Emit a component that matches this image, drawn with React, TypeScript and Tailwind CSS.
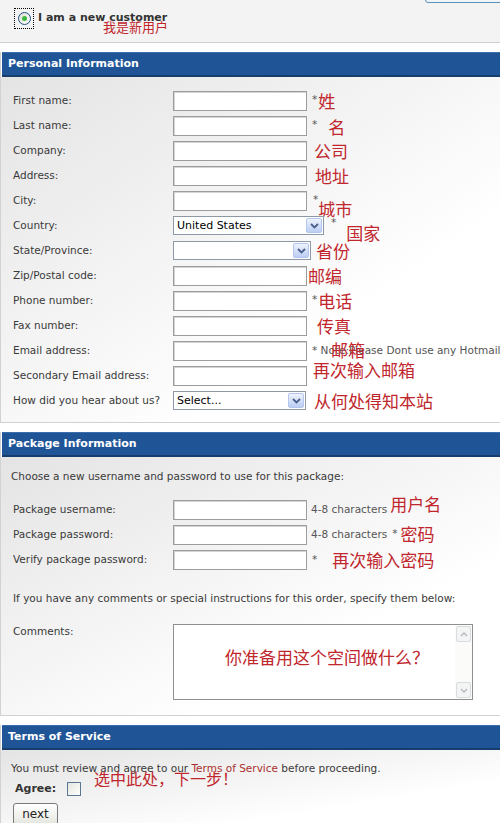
import type { ReactNode } from "react";

function Anno({ children, className }: { children: ReactNode; className: string }) {
  return (
    <span
      className={`whitespace-nowrap font-['Noto_Sans_CJK_SC',sans-serif] leading-none text-[#c0262c] ${className}`}
    >
      {children}
    </span>
  );
}

function Star({ className = "" }: { className?: string }) {
  return <span className={`text-[10.5px] leading-none text-[#555] ${className}`}>*</span>;
}

function TextBox({ className = "w-[134px]" }: { className?: string }) {
  return (
    <input
      readOnly
      className={`h-[20px] shrink-0 border border-[#9c9c9c] bg-white shadow-[inset_1px_1px_0_#d4d4d4] outline-none ${className}`}
    />
  );
}

function Combo({ className, text }: { className: string; text?: string }) {
  return (
    <div
      className={`flex h-[19px] shrink-0 items-center border border-[#8d9aa6] bg-white p-[1px] ${className}`}
    >
      <span className="flex-1 pl-[2px] text-[11px] leading-none text-black">{text}</span>
      <span className="flex h-[15px] w-[16px] items-center justify-center rounded-[2px] border border-[#b3c6ef] bg-linear-to-b from-[#eef3fd] to-[#bccdf3]">
        <svg width="9" height="6" viewBox="0 0 9 6">
          <path d="M1 1 L4.5 4.5 L8 1" stroke="#4a5f8c" strokeWidth="1.8" fill="none" />
        </svg>
      </span>
    </div>
  );
}

function Row({ label, children }: { label: string; children?: ReactNode }) {
  return (
    <div className="relative flex h-[25px] items-center">
      <span className="w-[172px] shrink-0 pl-[12px] text-[10.5px] text-[#3a3a3a]">{label}</span>
      {children}
    </div>
  );
}

function Section({ title, children, body }: { title: string; children: ReactNode; body: string }) {
  return (
    <div className="mt-[9px] border-b border-l border-[#d2d2d2]">
      <div className="ml-[1px] h-[25px] border-t border-b-2 border-t-[#3a6eac] border-b-[#163d6c] bg-[#1f5597] pl-[6px] text-[11px] font-bold leading-[21px] text-white">
        {title}
      </div>
      <div className={`bg-linear-to-br from-[#e4e4e4] to-white to-70% ${body}`}>{children}</div>
    </div>
  );
}

export default function App() {
  return (
    <div className="relative h-[823px] w-[500px] overflow-hidden bg-white font-['DejaVu_Sans',Verdana,sans-serif] text-[#3a3a3a]">
      {/* customer choice */}
      <div className="relative h-[43px] border-b border-[#cfcfcf] bg-[#f3f3f3]">
        <div className="absolute left-[425px] top-[-20px] h-[23px] w-[90px] rounded-[3px] border border-[#5b93b5] bg-[#eef4f8]" />
        <div className="flex items-center pl-[14px] pt-[8px]">
          <span className="flex h-[21px] w-[20px] items-center justify-center border border-dotted border-black">
            <span className="flex h-[13px] w-[13px] items-center justify-center rounded-full border border-[#1c5180] bg-linear-to-br from-[#dcdcd4] to-white">
              <span className="h-[5px] w-[5px] rounded-full bg-[#3fb83f]" />
            </span>
          </span>
          <span className="ml-[4px] text-[11px] font-bold text-[#333]">I am a new customer</span>
        </div>
        <Anno className="absolute left-[103px] top-[20px] text-[13px]">我是新用户</Anno>
      </div>

      <Section title="Personal Information" body="pt-[11px] pb-[9px]">
        <Row label="First name:">
          <TextBox />
          <Star className="ml-[5px] self-start mt-[6px]" />
          <Anno className="ml-[1px] text-[17px]">姓</Anno>
        </Row>
        <Row label="Last name:">
          <TextBox />
          <Star className="ml-[5px] self-start mt-[6px]" />
          <Anno className="ml-[11px] translate-y-[1px] text-[17px]">名</Anno>
        </Row>
        <Row label="Company:">
          <TextBox />
          <Anno className="ml-[7px] text-[17px]">公司</Anno>
        </Row>
        <Row label="Address:">
          <TextBox />
          <Anno className="ml-[8px] text-[17px]">地址</Anno>
        </Row>
        <Row label="City:">
          <TextBox />
          <Star className="ml-[6px] self-start mt-[6px]" />
          <Anno className="translate-y-[8px] text-[17px]">城市</Anno>
        </Row>
        <Row label="Country:">
          <Combo className="w-[151px]" text="United States" />
          <Star className="ml-[7px] self-start mt-[4px]" />
          <Anno className="ml-[10px] translate-y-[7px] text-[17px]">国家</Anno>
        </Row>
        <Row label="State/Province:">
          <Combo className="w-[138px]" />
          <Anno className="ml-[5px] text-[17px]">省份</Anno>
        </Row>
        <Row label="Zip/Postal code:">
          <TextBox />
          <Anno className="ml-[1px] text-[17px]">邮编</Anno>
        </Row>
        <Row label="Phone number:">
          <TextBox />
          <Star className="ml-[5px] self-start mt-[6px]" />
          <Anno className="ml-[1px] text-[17px]">电话</Anno>
        </Row>
        <Row label="Fax number:">
          <TextBox />
          <Anno className="ml-[10px] text-[17px]">传真</Anno>
        </Row>
        <Row label="Email address:">
          <TextBox />
          <span className="ml-[5px] whitespace-nowrap text-[10.5px] text-[#555]">
            * Note:Please Dont use any Hotmail
          </span>
          <Anno className="absolute left-[330px] top-[3px] text-[17px]">邮箱</Anno>
        </Row>
        <Row label="Secondary Email address:">
          <TextBox />
          <Anno className="ml-[6px] -translate-y-[6px] text-[17px]">再次输入邮箱</Anno>
        </Row>
        <Row label="How did you hear about us?">
          <Combo className="w-[133px]" text="Select..." />
          <Anno className="ml-[8px] text-[17px]">从何处得知本站</Anno>
        </Row>
      </Section>

      <Section title="Package Information" body="pt-[12px] pb-[15px]">
        <p className="pl-[10px] text-[10.5px] leading-[14px] text-[#3a3a3a]">
          Choose a new username and password to use for this package:
        </p>
        <div className="mt-[14px]">
          <Row label="Package username:">
            <TextBox />
            <span className="ml-[4px] text-[10.5px] text-[#555]">4-8 characters</span>
            <Anno className="ml-[3px] -translate-y-[6px] text-[17px]">用户名</Anno>
          </Row>
          <Row label="Package password:">
            <TextBox />
            <span className="ml-[4px] text-[10.5px] text-[#555]">4-8 characters</span>
            <Star className="ml-[5px] self-start mt-[6px]" />
            <Anno className="ml-[3px] -translate-y-[1px] text-[17px]">密码</Anno>
          </Row>
          <Row label="Verify package password:">
            <TextBox />
            <Star className="ml-[5px] self-start mt-[7px]" />
            <Anno className="ml-[15px] text-[17px]">再次输入密码</Anno>
          </Row>
        </div>
        <p className="mt-[19px] pl-[12px] text-[10.5px] leading-[14px] text-[#3a3a3a]">
          If you have any comments or special instructions for this order, specify them below:
        </p>
        <div className="mt-[19px] flex">
          <span className="w-[172px] shrink-0 pl-[12px] text-[10.5px] leading-[14px]">Comments:</span>
          <div className="flex h-[76px] w-[300px] border border-[#8f8f8f] bg-white">
            <div className="flex-1 pl-[51px] pt-[22px]">
              <Anno className="text-[17px]">你准备用这个空间做什么？</Anno>
            </div>
            <div className="flex w-[17px] flex-col justify-between bg-[#fbfbf9] p-[1px]">
              <span className="flex h-[16px] items-center justify-center rounded-[2px] border border-[#d6dcdf] bg-[#f3f4f4]">
                <svg width="8" height="5" viewBox="0 0 8 5">
                  <path d="M1 4 L4 1 L7 4" stroke="#b7bdc3" strokeWidth="1.5" fill="none" />
                </svg>
              </span>
              <span className="flex h-[16px] items-center justify-center rounded-[2px] border border-[#d6dcdf] bg-[#f3f4f4]">
                <svg width="8" height="5" viewBox="0 0 8 5">
                  <path d="M1 1 L4 4 L7 1" stroke="#b7bdc3" strokeWidth="1.5" fill="none" />
                </svg>
              </span>
            </div>
          </div>
        </div>
      </Section>

      <Section title="Terms of Service" body="relative h-[80px] pt-[11px]">
        <p className="whitespace-nowrap pl-[10px] text-[10.5px] leading-[14px] text-[#3a3a3a]">
          You must review and agree to our <span className="text-[#a8302c]">Terms of Service</span> before
          proceeding.
        </p>
        <div className="mt-[5px] flex h-[18px] items-center pl-[14px]">
          <span className="text-[11px] font-bold text-[#333]">Agree:</span>
          <span className="ml-[11px] h-[14px] w-[14px] border border-[#5a7690] bg-linear-to-br from-[#e4e4de] to-white" />
        </div>
        <Anno className="absolute left-[93px] top-[20px] text-[16px]">选中此处，下一步！</Anno>
        <button className="ml-[12px] mt-[5px] h-[22px] w-[45px] rounded-[3px] border border-[#7a7a7a] bg-linear-to-b from-white to-[#e6e6e0] text-[12px] leading-none text-[#222]">
          next
        </button>
      </Section>
    </div>
  );
}
